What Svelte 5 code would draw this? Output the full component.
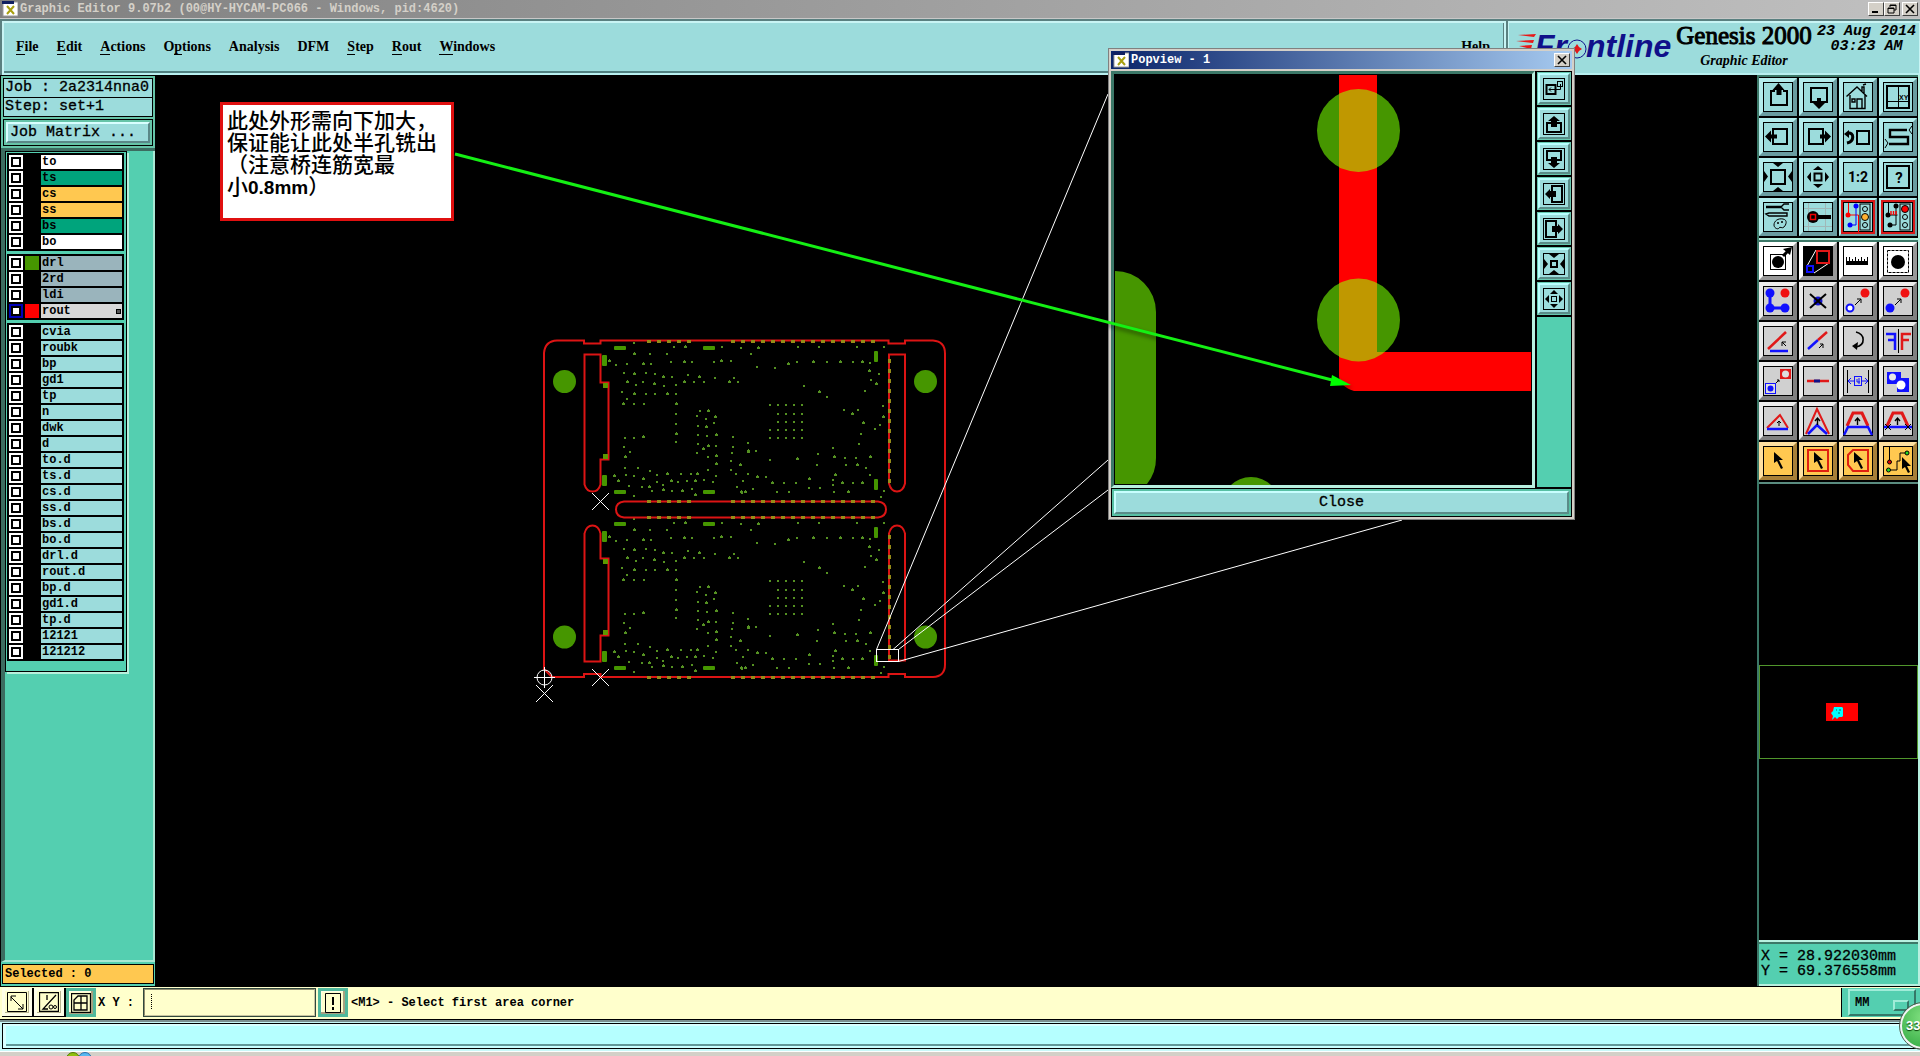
<script>
  const menus = [
    ['', 'F', 'ile'], ['', 'E', 'dit'], ['', 'A', 'ctions'], ['O', 'p', 'tions'],
    ['Analysis', '', ''], ['DFM', '', ''], ['', 'S', 'tep'], ['', 'R', 'out'], ['', 'W', 'indows']
  ];

  const layerGroups = [
    [
      { name: 'to', tone: 'white' }, { name: 'ts', tone: 'mask' }, { name: 'cs', tone: 'amber' },
      { name: 'ss', tone: 'amber' }, { name: 'bs', tone: 'mask' }, { name: 'bo', tone: 'white' }
    ],
    [
      { name: 'drl', tone: 'steel', swatch: 'green' }, { name: '2rd', tone: 'steel' },
      { name: 'ldi', tone: 'steel' }, { name: 'rout', tone: 'work', swatch: 'red', active: true }
    ],
    ['cvia', 'roubk', 'bp', 'gd1', 'tp', 'n', 'dwk', 'd', 'to.d', 'ts.d', 'cs.d', 'ss.d', 'bs.d',
      'bo.d', 'drl.d', 'rout.d', 'bp.d', 'gd1.d', 'tp.d', '12121', '121212'].map((name) => ({ name, tone: 'aqua' }))
  ];

  const noteLines = ['此处外形需向下加大，', '保证能让此处半孔铣出', '（注意桥连筋宽最'];

  const K = 'fill="none" stroke="#000"';
  const cursor = '<path d="M11 6v11l3-2 4 8 2-1-4-8h4z" fill="#000"/>';
  const smallArrow = '<path d="M12 19l6-6M14 13h4v4" fill="none" stroke="#000"/>';
  const upArrow = '<path d="M14.500 12v7M12 15l2.500-3 2.500 3" fill="none" stroke="#000" stroke-width="1.400"/>';

  const viewTools = [
    { n: 'Pan up', d: `<path d="M12 9H8v14h16V9h-4" ${K} stroke-width="2"/><path d="M15.500 1l6 7h-3v5h-5V8h-4z"/>` },
    { n: 'Pan down', d: `<rect x="8" y="6" width="16" height="14" ${K} stroke-width="2"/><path d="M16 27l6-6h-4v-5h-4v5h-4z"/>` },
    { n: 'Home', d: `<path d="M3.500 14.500L14 5l10 9.500M7 13v13.500h15V13M14 26v-9h5v9M9 17h3v3H9zM19 9V5h2v6M20 3l3-1" ${K} stroke-width="1.400"/>` },
    { n: 'Origin', d: `<rect x="4" y="4" width="22" height="22" ${K} stroke-width="2"/><path d="M15.500 4v22M4 19.500h22" ${K}/><text x="16" y="18" font-size="7" font-family="Liberation Sans">XY</text>` },
    { n: 'Pan left', d: `<rect x="10" y="7" width="14" height="15" ${K} stroke-width="2"/><path d="M2 14.500l6-6v4h6v4H8v4z"/>` },
    { n: 'Pan right', d: `<rect x="6" y="7" width="14" height="15" ${K} stroke-width="2"/><path d="M28 14.500l-6-6v4h-5v4h5v4z"/>` },
    { n: 'Previous view', d: `<rect x="14" y="9" width="12" height="13" ${K} stroke-width="2"/><path d="M5 11c6-1 7 8-1 10" ${K} stroke-width="3"/><path d="M1 12l5-4v8z"/>` },
    { n: 'Serpentine', d: `<path d="M24 8H7v7h18v7H6" ${K} stroke-width="2.400"/><path d="M29 4l-3 4 3 4M2 17l3 4-3 5" ${K}/>` },
    { n: 'Zoom in', d: `<rect x="8" y="8" width="14" height="14" ${K} stroke-width="2"/><path d="M10 1h10l-5 4zM10 29h10l-5-4zM1 9v11l4-5.500zM29 9v11l-4-5.500z"/>` },
    { n: 'Zoom out', d: `<rect x="11.500" y="11.500" width="7" height="7" ${K} stroke-width="2"/><path d="M10 8h10l-5-4zM10 22h10l-5 4zM8 10v10l-4-5zM22 10v10l4-5z"/>` },
    { n: 'Scale 1:2', d: `<text x="15" y="20" text-anchor="middle" font-size="14" font-weight="bold" font-family="Roboto">1:2</text>` },
    { n: 'Help on tool', d: `<rect x="4" y="4" width="22" height="22" ${K} stroke-width="2"/><text x="16" y="21" text-anchor="middle" font-size="15" font-weight="bold" font-family="Roboto">?</text>` },
    { n: 'Options', d: `<path d="M3 5h15" ${K} stroke-width="2.500"/><path d="M26 2h-5l-3 3 3 3h5M3 12l3-1h18v3H6z" ${K} stroke-width="1.400"/><path d="M11 23c0-4 4-7 9-6s3 6 1 8-4-1-5 1-5 0-5-3z" ${K}/><circle cx="15" cy="21" r="1"/><circle cx="19" cy="20" r="1"/>` },
    { n: 'Probe', d: `<path d="M5.500 1v28M22.500 1v28M1 6.500h28M1 24.500h28" fill="none" stroke="#a0b8b8"/><path d="M12 15h16" ${K} stroke-width="4"/><circle cx="10" cy="15" r="6"/><rect x="7.500" y="12.500" width="5" height="5" fill="none" stroke="#e00" stroke-width="1.500"/>` },
    { n: 'Nets control', alert: true, d: `<path d="M5.500 1v12h10v17" fill="none" stroke="#f00"/><circle cx="5" cy="13" r="2.500" fill="#f00"/><path d="M13 4v19H7" fill="none" stroke="#00f"/><circle cx="13" cy="4" r="2.500" fill="#00f"/><circle cx="7" cy="23" r="2.500" fill="#00f"/><rect x="17" y="2" width="10" height="26" ${K}/><circle cx="22" cy="7" r="2.500" ${K}/><circle cx="22" cy="15" r="3.500" fill="#ffb030" stroke="#000"/><circle cx="22" cy="23" r="2.500" ${K}/>` },
    { n: 'Nets stop', alert: true, d: `<path d="M5.500 1v12h9M13 4v19H7" ${K}/><circle cx="5" cy="13" r="2.500"/><circle cx="13" cy="4" r="2.500"/><circle cx="7" cy="23" r="2.500"/><path d="M8 13V9M10.500 13V9M13 13V9" fill="none" stroke="#f00" stroke-width="1.400"/><rect x="17" y="2" width="10" height="26" ${K}/><circle cx="22" cy="7" r="3.500" fill="#f00" stroke="#000"/><circle cx="22" cy="15" r="2.500" ${K}/><circle cx="22" cy="23" r="2.500" ${K}/>` }
  ];

  const editTools = [
    { n: 'Select feature', c: 'white', d: `<rect x="7.500" y="8.500" width="15" height="15" ${K}/><circle cx="15" cy="16" r="6"/><path d="M20 10l5-5" ${K} stroke-width="3"/><path d="M20 3l9-2-2 8z"/>` },
    { n: 'Popview', c: 'white', d: `<rect width="30" height="30"/><path d="M4 20L13 4M11 27l15-10" fill="none" stroke="#fff"/><rect x="14" y="5" width="12" height="12" fill="none" stroke="#e01818" stroke-width="2"/><rect x="4" y="20" width="6" height="6" fill="none" stroke="#11f" stroke-width="2"/>` },
    { n: 'Measure', c: 'white', d: `<path d="M3 11h1v4h2v-4h1v4h2v-2h1v2h2v-4h1v4h2v-2h1v2h2v-4h1v4h2v-2h1v2h2v-4h1v8H3z"/>` },
    { n: 'Highlight', c: 'white', d: `<rect x="4.500" y="4.500" width="21" height="22" ${K} stroke-dasharray="3 1"/><circle cx="15" cy="16" r="7"/>` },
    { n: 'Polyline', d: `<path d="M7 7v15h15" fill="none" stroke="#11f" stroke-width="3"/><g fill="#11f"><circle cx="7" cy="7" r="4.500"/><circle cx="7" cy="22" r="4.500"/><circle cx="22" cy="22" r="4.500"/></g><circle cx="22" cy="7" r="4.500" fill="#f01010"/>` },
    { n: 'Delete', d: `<circle cx="15" cy="15" r="4.500" fill="#11c"/><path d="M7 8l16 14M23 8L7 22" ${K} stroke-width="2"/>` },
    { n: 'Copy', d: `<circle cx="22" cy="7" r="4.500" fill="#f01010"/><circle cx="7" cy="22" r="3.500" fill="#fff" stroke="#11f" stroke-width="2"/>${smallArrow}` },
    { n: 'Move', d: `<circle cx="22" cy="7" r="4.500" fill="#f01010"/><circle cx="7" cy="22" r="4.500" fill="#11f"/>${smallArrow}` },
    { n: 'Rotate line', d: `<path d="M5 23L23 6" stroke="#e01818" stroke-width="2.500"/><path d="M7 25h18" stroke="#11f" stroke-width="2.500"/><path d="M23 20l-4-4M19 20v-4h4" ${K}/>` },
    { n: 'Extend line', d: `<path d="M5 23l10-9" stroke="#11f" stroke-width="2.500"/><path d="M15 14l9-8" stroke="#e01818" stroke-width="2.500"/><path d="M16 22l4-4M17 18h3v4" ${K}/>` },
    { n: 'Rotate', d: `<path d="M13 6c9 2 10 13 0 15" ${K} stroke-width="1.600"/><path d="M9 20l6-4-1 8z"/>` },
    { n: 'Mirror', d: `<path d="M15.500 3v24" ${K}/><path d="M3 8h9v16M5 14h7" fill="none" stroke="#11f" stroke-width="2.500"/><path d="M28 8h-9v16M26 14h-7" fill="none" stroke="#e01818" stroke-width="2.500"/>` },
    { n: 'Change symbol', d: `<rect x="17" y="3" width="11" height="10" fill="#e01818"/><circle cx="22.500" cy="8" r="3.500" fill="#ddd"/><rect x="2.500" y="17.500" width="10" height="10" fill="#ddd" stroke="#11f"/><circle cx="7.500" cy="22.500" r="3" fill="#11f"/><path d="M13 17l3-3M14 14h2v2" ${K}/>` },
    { n: 'Break', d: `<path d="M4 15h22" stroke="#e01818" stroke-width="2.500"/><path d="M11 15h6" stroke="#118" stroke-width="3"/>` },
    { n: 'Spread', d: `<path d="M4.500 4v23M25.500 4v23" ${K}/><g fill="none" stroke="#11f"><rect x="11.500" y="10.500" width="7" height="9"/><path d="M11 15H6M8 12l-3 3 3 3M19 15h5M22 12l3 3-3 3M14 13v3h3M16 12v6"/></g>` },
    { n: 'Merge', d: `<path d="M4 6h14v6h8v14H14v-8H4z" fill="#11f"/><circle cx="9.500" cy="11" r="3.500" fill="#e8e8e8"/><circle cx="18" cy="19" r="4.500" fill="#fff"/>` },
    { n: 'Stretch corner', d: `<path d="M4 22L17 9l8 13" fill="none" stroke="#e01818" stroke-width="2"/><path d="M4 23h21" stroke="#11f" stroke-width="2.500"/><path d="M16 20v-5M14 17l2-2 2 2" ${K}/>` },
    { n: 'Stretch peak', d: `<path d="M3 28L14 3l12 25" fill="none" stroke="#e01818" stroke-width="2"/><path d="M5 28l9-9 10 9" fill="none" stroke="#11f" stroke-width="2.500"/>${upArrow}` },
    { n: 'Stretch trapezoid', d: `<path d="M4 20l6-13h9l6 13" fill="none" stroke="#e01818" stroke-width="3"/><path d="M1 29l4-8h20l4 8" fill="none" stroke="#11f" stroke-width="2.500"/>${upArrow}` },
    { n: 'Move segment', d: `<path d="M4 20l6-13h9l6 13" fill="none" stroke="#e01818" stroke-width="3"/><path d="M1 21h28" stroke="#11f" stroke-width="2.500"/><path d="M2 18l6 6M8 18l-6 6M22 18l6 6M28 18l-6 6" ${K}/>${upArrow}` },
    { n: 'Select', c: 'amber', d: cursor },
    { n: 'Frame select', c: 'amber', d: `<rect x="5" y="4" width="20" height="21" fill="none" stroke="#e02010" stroke-width="2"/>${cursor}` },
    { n: 'Polygon select', c: 'amber', d: `<path d="M10 4h15v21H10l-5-6V9z" fill="none" stroke="#e02010" stroke-width="2"/>${cursor}` },
    { n: 'Net select', c: 'amber', d: `<path d="M6.500 1v15M6 24h8v-9h3V7h6" ${K}/><circle cx="6.500" cy="16" r="2" fill="#d00" stroke="#000"/><circle cx="5.500" cy="24" r="2" fill="#2d2" stroke="#000"/><circle cx="24" cy="7" r="2" fill="#2d2" stroke="#000"/><path d="M19 11v12l3-2 3 6 2-1-3-6h4z"/>` }
  ];

  const popTools = [
    { n: 'Link view', d: `<rect x="3.500" y="7" width="9" height="9" ${K} stroke-width="2"/><rect x="14.500" y="3.500" width="5" height="5" ${K}/><path d="M17.500 6v5.500H6M8 9.500l-2 2 2 2" ${K}/>` },
    { n: 'Scroll up', d: `<path d="M8 10H4v9h14v-9h-4" ${K} stroke-width="2"/><path d="M11 3l6 5h-3v6H8V8H5z"/>` },
    { n: 'Scroll down', d: `<path d="M8 12H4V3h14v9h-4" ${K} stroke-width="2"/><path d="M11 20l6-5h-3V9H8v6H5z"/>` },
    { n: 'Scroll left', d: `<path d="M9 8V3h10v16H9v-5" ${K} stroke-width="2"/><path d="M2 11l5-5v2h6v6H7v2z"/>` },
    { n: 'Scroll right', d: `<path d="M13 8V3H3v16h10v-5" ${K} stroke-width="2"/><path d="M20 11l-5-5v2H9v6h6v2z"/>` },
    { n: 'Zoom in view', d: `<rect x="8" y="8" width="6" height="6" ${K} stroke-width="2"/><path d="M6 1h10l-5 4zM6 21h10l-5-4zM1 6v10l4-5zM21 6v10l-4-5z"/>` },
    { n: 'Zoom out view', d: `<rect x="8.500" y="8.500" width="5" height="5" ${K}/><path d="M7 6h8l-4-4zM7 16h8l-4 4zM6 7v8l-4-4zM16 7v8l4-4z"/>` }
  ];

  /* drill hits of one board, in workspace coordinates */
  const hits = [
    634,343, 674,347, 685,347, 722,347, 741,348, 634,354, 650,354, 667,354, 609,361, 616,365, 627,364, 643,364, 651,364, 671,362, 684,362, 692,362,
    714,362, 721,361, 731,361, 624,373, 634,374, 646,373, 655,374, 663,377, 672,377, 688,375, 699,377, 715,378, 734,378, 627,382, 636,385, 643,382,
    654,384, 664,386, 676,385, 684,382, 694,382, 704,382, 729,382, 738,382, 622,392, 634,394, 646,394, 655,394, 667,394, 676,394, 627,399, 623,404,
    634,404, 644,404, 676,404, 676,414, 676,424, 676,434, 676,442, 700,411, 708,411, 697,416, 706,419, 715,417, 714,423, 698,426, 706,427,
    625,438, 634,438, 643,437, 624,447, 630,452, 625,457, 698,435, 707,436, 716,435, 733,437, 698,444, 708,446, 716,446, 733,447, 703,449,
    697,453, 708,457, 716,456, 732,453, 748,443, 748,451, 731,461, 731,470, 740,465, 748,474, 736,474, 716,464, 708,470, 716,476, 697,474,
    625,468, 638,468, 614,476, 626,475, 634,476, 643,479, 650,471, 657,475, 667,474, 681,474, 691,474, 618,481, 629,486, 642,487, 649,487,
    657,482, 663,485, 671,481, 678,482, 687,481, 695,481, 704,480, 713,482, 663,490, 652,491, 672,491, 682,491, 692,489, 634,496, 695,495,
    737,487, 743,481, 745,492, 742,493, 751,354, 758,348, 757,367, 775,368, 788,364, 798,347, 797,362, 813,362, 819,347, 827,362,
    840,362, 853,362, 857,347, 862,362, 870,363, 884,347, 869,371, 879,374, 871,380, 876,384, 865,391, 804,386, 819,392, 827,397,
    844,410, 852,414, 858,410, 883,406, 883,417, 880,425, 875,429, 863,423, 861,434, 859,444, 748,452, 756,451, 770,460, 797,459,
    818,454, 833,448, 834,457, 845,458, 856,458, 870,457, 817,465, 846,465, 857,465, 866,468, 870,475, 757,477, 766,477,
    753,489, 772,483, 784,483, 796,483, 809,479, 809,488, 820,488, 835,475, 833,480, 833,485, 842,483, 853,483, 834,492, 848,492,
    777,492, 789,492, 741,492, 884,491, 881,497, 862,483
  ];
  const dots = [];
  for (let r = 0; r < 5; r++) {
    for (let c = 0; c < 5; c++) {
      if (c === 0 && (r === 1 || r === 2)) continue;
      dots.push([770 + c * 8, [405, 414, 422, 430, 438][r]]);
    }
  }
  for (let i = 0; i < hits.length; i += 2) dots.push([hits[i], hits[i + 1]]);
  const dotPath = dots
    .map(([x, y], i) => (i > 22 && i % 3 === 1 ? `M${x - 2} ${y}h1v-1h1v-1h1v1h1v2h-3v-1h-1z` : `M${x - 1} ${y - 1}h2v2h-2z`))
    .join('');

  const edgeX = [649, 659, 669, 679, 689, ...Array.from({ length: 15 }, (_, i) => 733 + i * 10)];
  const edgePath = [341, 501, 517, 677].flatMap((y) => edgeX.map((x) => `M${x - 2} ${y - 1}h4v3h-4z`)).join('');
  const sidePath = [361, 537].flatMap((y0) => Array.from({ length: 13 }, (_, i) => `M888 ${y0 - 2 + i * 10}h3v4h-3z`)).join('');

  let xy = $state('');
  let unit = $state('MM');
</script>

{#snippet appIcon()}
  <svg class="app-icon" viewBox="0 0 16 16" aria-hidden="true">
    <rect x="1" y="1" width="15" height="14" fill="#fff" stroke="#999" />
    <rect x="0" y="0" width="12" height="3" fill="#102060" />
    <path d="M5 5l7 8M12 5l-7 8" stroke="#a8a010" stroke-width="2" />
  </svg>
{/snippet}

{#snippet tool(t, tone)}
  <button class="tool {t.c ?? tone}" class:alert={t.alert} aria-label={t.n}>
    <svg viewBox="0 0 30 30" aria-hidden="true">
      <rect x="0.500" y="0.500" width="29" height="29" fill="none" stroke="#000" />
      {@html t.d}
    </svg>
  </button>
{/snippet}

<div class="app">
  <header class="titlebar">
    {@render appIcon()}
    <h1>Graphic Editor 9.07b2 (00@HY-HYCAM-PC066 - Windows, pid:4620)</h1>
    <div class="win-buttons">
      <button class="win" aria-label="Minimize"><svg viewBox="0 0 12 10"><path d="M2 8h6" stroke="#000" stroke-width="2" /></svg></button>
      <button class="win" aria-label="Restore"><svg viewBox="0 0 12 10"><path d="M4 3V1h6v5H8M4 1.500h6M2 4h6v5H2zM2 4.500h6" fill="none" stroke="#000" /></svg></button>
      <button class="win apart" aria-label="Close window"><svg viewBox="0 0 12 10"><path d="M2 1l8 8M10 1L2 9" stroke="#000" stroke-width="1.600" /></svg></button>
    </div>
  </header>

  <div class="top">
    <nav class="menubar">
      {#each menus as [a, key, b]}
        <button class="menu">{a}<span class="key">{key}</span>{b}</button>
      {/each}
      <button class="menu help">Help</button>
    </nav>
    <div class="brand">
      <svg class="logo" viewBox="0 0 160 40" role="img" aria-label="Frontline">
        <path d="M4 8l18-1-2 3zM2 14l18-1-1 3zM5 19l13-1-1 4z" fill="#e81818" />
        <g class="logo-text">
          <text x="21" y="30">Fr</text>
          <text x="72" y="30">ntline</text>
        </g>
        <circle cx="63" cy="22" r="9" fill="none" stroke="#10108a" />
        <path d="M63 17l2 3 3 2-3 2-2 3-2-3-3-2 3-2z" fill="#e01818" />
      </svg>
      <div class="product">
        <strong>Genesis 2000</strong>
        <em>Graphic Editor</em>
      </div>
      <time class="clock"><span>23 Aug 2014</span><span>03:23 AM</span></time>
    </div>
  </div>

  <main class="main">
    <aside class="left">
      <section class="job">
        <p>Job : 2a2314nna0</p>
        <p>Step: set+1</p>
        <div class="matrix"><button>Job Matrix ...</button></div>
      </section>
      <section class="layers-pane">
        <div class="layers">
          {#each layerGroups as group}
            <ul>
              {#each group as layer}
                <li>
                  <label class="row">
                    <input type="checkbox" class:active={layer.active} />
                    <i class="swatch {layer.swatch ?? ''}"></i>
                    <span class="name {layer.tone}">{layer.name}{#if layer.active}<b class="mark" aria-hidden="true"></b>{/if}</span>
                  </label>
                </li>
              {/each}
            </ul>
          {/each}
        </div>
      </section>
      <p class="selected">Selected : 0</p>
    </aside>

    <section class="workspace">
      <svg class="canvas" viewBox="155 75 1602 911" width="1602" height="911" aria-label="Panel drawing">
        <g fill="#469600">
          <circle cx="564.500" cy="381.500" r="11.500" /><circle cx="925.500" cy="381.500" r="11.500" />
          <circle cx="564.500" cy="637" r="11.500" /><circle cx="925.500" cy="637" r="11.500" />
          {#each [0, 176] as dy}
            <g transform="translate(0 {dy})">
              <path d={dotPath} fill="#559122" />
              {#each [[614, 346], [703, 346], [614, 490], [703, 490]] as [x, y]}
                <rect {x} {y} width="12" height="4" rx="1" />
              {/each}
              {#each [[602, 355], [602, 475], [874, 351], [874, 479]] as [x, y]}
                <rect {x} {y} width={x > 800 ? 4 : 5} height="11" rx="1" />
              {/each}
            </g>
          {/each}
        </g>
        <g class="rout">
          <path d="M557 340.500h27v3h16.500v-3h288v3h16.500v-3h28q12 1 12 13v311q0 12-12 12.500h-28v-3h-16.500v3h-288v-3h-16.500v3h-32l-8-8V353q1-12 13-12.500z" />
          <path d="M584.500 354.500h16v28h8v77h-8v25q-2 7-8 7t-8-7z" />
          <path d="M889 354.500h16v129q-2 8-8 8t-8-8z" />
          <path d="M624 501.500h254q8 1 8 8t-8 8H624q-8-1-8-8t8-8z" />
          <path d="M584.500 661.500h16v-26h8v-77h-8v-25q-2-8-8-8t-8 8z" />
          <path d="M889 660.500h16v-127q-2-8-8-8t-8 8z" />
        </g>
        <path d="M603 383h5v5h-5zM603 454h5v5h-5zM603 559h5v5h-5zM603 630h5v5h-5z" fill="#5c9800" />
        <path d="{edgePath}{sidePath}" fill="#968c18" />
        <g fill="none" stroke="#fff">
          <path d="M592 493l17 17M609 493l-17 17M592 669l17 17M609 669l-17 17M536 685l17 17M553 685l-17 17" />
          <circle cx="544.500" cy="677.500" r="7.500" />
          <path d="M534 677.500h21M544.500 667v21" />
          <rect x="876.500" y="649.500" width="22" height="12" />
          <path d="M876.500 649.500L1108 94M893 649.500L1108 460M898.500 649.500L1108 490M898.500 661.500L1402 520" />
        </g>
      </svg>

      <section class="popview" aria-label="Popview - 1">
        <header class="pop-title">
          {@render appIcon()}
          <h2>Popview - 1</h2>
          <button class="win" aria-label="Close popview"><svg viewBox="0 0 12 10"><path d="M2 1l8 8M10 1L2 9" stroke="#000" stroke-width="1.600" /></svg></button>
        </header>
        <div class="pop-body">
          <svg class="detail" viewBox="1114 74 418 411" preserveAspectRatio="xMinYMin meet" aria-label="Magnified rout corner">
            <rect x="1113" y="74" width="420" height="411" fill="#000" />
            <g fill="#469600">
              <circle cx="1358.500" cy="130.500" r="41.500" /><circle cx="1358.500" cy="320" r="41.500" />
              <path d="M1115 271a41 41 0 0 1 41 41v146a41 41 0 0 1-9 26h-32z" />
              <circle cx="1251" cy="506" r="29" />
            </g>
            <path d="M1339 75h38v277h154v39h-177q-15-5-15-15z" fill="#f00" />
            <clipPath id="routClip"><path d="M1339 75h38v277h154v39h-177q-15-5-15-15z" /></clipPath>
            <g fill="#c09800" clip-path="url(#routClip)">
              <circle cx="1358.500" cy="130.500" r="41.500" /><circle cx="1358.500" cy="320" r="41.500" />
            </g>
          </svg>
          <div class="pop-tools">
            {#each popTools as t}
              <div class="cell">
                <button aria-label={t.n}>
                  <svg viewBox="0 0 22 22" aria-hidden="true">
                    <rect x="0.500" y="0.500" width="21" height="21" fill="none" stroke="#000" />
                    {@html t.d}
                  </svg>
                </button>
              </div>
            {/each}
          </div>
        </div>
        <div class="pop-close"><button>Close</button></div>
      </section>

      <div class="note" lang="zh-CN">
        {#each noteLines as line}<p>{line}</p>{/each}
        <p>小<span>0.8mm</span>）</p>
      </div>

      <svg class="pointer" viewBox="155 75 1602 911" width="1602" height="911" aria-hidden="true">
        <path d="M455 154L1336 381" stroke="#14f014" stroke-width="3" />
        <path d="M1332 375l19 10-21 1z" fill="#0f0" />
      </svg>
    </section>

    <aside class="right">
      <div class="tools">{#each viewTools as t}{@render tool(t, 'aqua')}{/each}</div>
      <div class="tools edit">{#each editTools as t}{@render tool(t, 'gray')}{/each}</div>
      <div class="overview">
        <div class="extent">
          <svg viewBox="0 0 32 18" aria-label="Overview map">
            <rect width="32" height="18" fill="#f00" />
            <path d="M8 4h8l1 1v8l-1 1h-3l-2 2-2-2-3 3 1-4-2-3 2-2z" fill="#0ff" />
            <path d="M10 7h1M13 7h2M12 10h2" stroke="#066" />
          </svg>
        </div>
      </div>
      <output class="coords"><span>X = 28.922030mm</span><span>Y = 69.376558mm</span></output>
    </aside>
  </main>

  <footer class="command">
    <button class="cmd" aria-label="Absolute mode"><svg viewBox="0 0 20 20"><path d="M.5.500h19v19H.5zM4 5l12 12M4 9V4h5M16 12v5h-5" fill="none" stroke="#000" /></svg></button>
    <button class="cmd" aria-label="Angle mode"><svg viewBox="0 0 20 20"><path d="M.5.500h19v19H.5zM17 3L4 17h5M8 3v5" fill="none" stroke="#000" stroke-width="1.300" /><circle cx="12" cy="15" r="2" fill="none" stroke="#000" /><circle cx="16" cy="15" r="1.500" fill="none" stroke="#000" /></svg></button>
    <button class="cmd framed" aria-label="Grid snap"><svg viewBox="0 0 20 20"><path d="M.5.500h19v19H.5zM7 3h9v14H3V7zM10 3v14M3 10h13" fill="none" stroke="#000" stroke-width="1.300" /></svg></button>
    <label class="xy" for="xy">X Y :</label>
    <input id="xy" class="xy-input" bind:value={xy} />
    <button class="cmd framed" aria-label="Apply"><svg viewBox="0 0 20 20"><path d="M2.500.500h15v19h-15z" fill="none" stroke="#000" /><path d="M10 4v8M10 14v3" stroke="#000" stroke-width="2" /></svg></button>
    <output class="message">&lt;M1&gt; - Select first area corner</output>
    <div class="unit">
      <select bind:value={unit} aria-label="Units"><option>MM</option><option>INCH</option></select>
    </div>
  </footer>
  <div class="status"><div></div></div>
  <div class="taskbar"><i class="orb lime"></i><i class="orb sky"></i></div>
  <div class="badge">33</div>
</div>

<style>
  :global(body) { margin: 0; background: #000; overflow: hidden; }
  .app { --aqua: #9cdcdc; --green: #54cfb0; --mono: "Liberation Mono", monospace;
    position: relative; display: flex; flex-direction: column; height: 100vh; overflow: hidden;
    font: bold 12px/14px var(--mono); color: #000; background: #000; }
  .app :global(*) { box-sizing: border-box; }
  button, input, select { font: inherit; color: inherit; margin: 0; padding: 0; border-radius: 0; }
  p, h1, h2, ul { margin: 0; padding: 0; font: inherit; list-style: none; }
  svg { display: block; }

  .titlebar { display: flex; align-items: center; height: 19px; flex: none; padding: 0 2px; gap: 2px;
    background: linear-gradient(90deg, #808080, #c0c0c0); color: #d4d0c8; border-bottom: 1px solid #c8c8c8; }
  .titlebar h1 { flex: 1; }
  .app-icon { width: 16px; height: 16px; flex: none; }
  .win-buttons { display: flex; }
  .win { width: 16px; height: 14px; background: #d4d0c8; border: 1px solid; border-color: #fff #404040 #404040 #fff; display: grid; place-items: center; }
  .win svg { width: 12px; height: 10px; }
  .apart { margin-left: 2px; }

  .top { display: flex; height: 56px; flex: none; background: #5a8080; padding-top: 2px; }
  .menubar, .brand { background: var(--aqua); border: 2px solid #c8f4f4; border-bottom-color: #b8f0f0; display: flex; }
  .menubar { flex: 1; margin: 0 2px; align-items: center; padding: 0 14px 3px 12px; gap: 18px; font: bold 14px/16px "Liberation Serif", serif;
    box-shadow: inset 0 -2px #4f8080, inset -1px 0 #5a8080; }
  .menu { background: none; border: 0; }
  .key { border-bottom: 1px solid #000; }
  .help { margin-left: auto; }
  .brand { width: 412px; border-left-width: 1px; border-right-width: 1px; padding: 0 3px 0 5px; }
  .logo { width: 160px; height: 40px; margin-top: 4px; flex: none; }
  .logo-text { font: italic bold 32px "Liberation Sans", sans-serif; fill: #10108a; }
  .product { display: flex; flex-direction: column; align-items: center; width: 138px; margin-left: 1px; }
  .product strong { font: 25px/26px "Liberation Serif", serif; white-space: nowrap; -webkit-text-stroke: 1px #000; }
  .product em { font: italic bold 14px/24px "Liberation Serif", serif; }
  .clock { display: flex; flex-direction: column; align-items: center; font: italic bold 15px/15px var(--mono); margin: 1px 0 0 auto; white-space: nowrap; }

  .main { display: flex; flex: 1; min-height: 0; }
  .left { width: 155px; flex: none; display: flex; flex-direction: column; background: var(--green); border-left: 1px solid #000; border-top: 1px solid #000; }
  .job { padding: 2px; background: #66c4a8; font: 15px/18px var(--mono); -webkit-text-stroke: 1px #000; border-bottom: 3px solid #3c6c60; }
  .job, .coords, .pop-close button { -webkit-text-stroke-width: thin; }
  .job p { background: var(--aqua); border: 1px solid #000; height: 20px; padding: 0 1px; white-space: nowrap; }
  .job p + p { margin-top: -1px; }
  .matrix { border: 1px solid #000; padding: 2px; margin-top: 2px; }
  .matrix button { width: 100%; height: 21px; text-align: left; padding-left: 2px; background: var(--aqua); border: 2px solid; border-color: #d8ffff #5a8888 #5a8888 #d8ffff; }
  .layers-pane { flex: 1; border-left: 4px solid #3c6c60; border-right: 2px solid #a8e8d4; border-bottom: 2px solid #a8e8d4; }
  .layers { width: 122px; border: 1px solid #000; box-shadow: 2px 2px #b8f0dc; padding: 1px 2px 10px 1px; display: flex; flex-direction: column; gap: 3px; }
  .layers ul { background: #000; padding: 2px 2px 0 1px; }
  .row { display: flex; gap: 2px; height: 16px; padding-left: 1px; }
  .row input { appearance: none; width: 14px; height: 14px; flex: none; background: #fff; border: 2px solid #fff; box-shadow: inset 0 0 0 2px #000; }
  .row input.active { border-color: #0000b8; }
  .swatch { width: 14px; height: 14px; flex: none; }
  .swatch.green { background: #469600; }
  .swatch.red { background: #f00; }
  .name { flex: 1; height: 14px; padding: 0 1px; display: flex; justify-content: space-between; align-items: center; line-height: 14px; }
  .name.white { background: #fff; }
  .name.mask { background: #00a47c; }
  .name.amber { background: #ffc850; }
  .name.steel { background: #9ab4bc; }
  .name.work { background: #d8d8d8; }
  .name.aqua { background: var(--aqua); }
  .mark { width: 5px; height: 5px; border: 1px solid #000; background: #555; }
  .selected { height: 20px; margin: 2px 1px; padding-left: 2px; line-height: 18px; background: #ffc850; border: 1px solid #000; }

  .workspace { flex: 1; min-width: 0; position: relative; background: #000; }
  .canvas, .pointer { position: absolute; left: 0; top: 0; }
  .pointer { z-index: 3; pointer-events: none; filter: drop-shadow(1px 3px 2px rgba(0, 0, 0, 0.500)); }
  .rout { fill: none; stroke: #dc1414; stroke-width: 2; }
  .note { position: absolute; left: 65px; top: 27px; width: 234px; height: 119px; padding: 3px 0 0 4px; background: #fff; border: 3px solid #e01010;
    font: 500 21px/22px "Noto Sans CJK SC", sans-serif; white-space: nowrap; }
  .note p { height: 22px; }
  .note span { font: bold 19px/22px "Liberation Sans", sans-serif; }

  .popview { position: absolute; z-index: 2; left: 953px; top: -27px; width: 467px; display: flex; flex-direction: column; background: #58c0a4;
    border: 3px solid #d4d0c8; outline: 1px solid #808080; outline-offset: -1px; box-shadow: inset 1px 1px #404040; }
  .pop-title { display: flex; align-items: center; gap: 2px; height: 18px; padding: 0 2px; color: #fff; background: linear-gradient(90deg, #0a246a, #a6caf0); }
  .pop-title h2 { flex: 1; }
  .pop-body { display: flex; border-top: 2px solid #d4d0c8; }
  .detail { flex: 1; min-width: 0; height: 417px; border: 3px solid; border-color: #3c7868 #b8f0e0 #b8f0e0 #3c7868; }
  .pop-tools { width: 37px; background: var(--green); border: solid #000; border-width: 1px 1px 1px 2px; }
  .cell { height: 35px; padding: 1px; border-bottom: 2px solid #000; background: #66c8b0; }
  .cell button { width: 32px; height: 31px; display: grid; place-items: center; background: var(--aqua); border: 2px solid; border-color: #b8ffff #5a8c88 #5a8c88 #b8ffff; }
  .cell svg { width: 22px; height: 22px; }
  .pop-close { padding: 2px; border: 1px solid #000; }
  .pop-close button { width: 100%; height: 23px; background: var(--aqua); border: 2px solid; border-color: #c8ffff #5a8c88 #5a8c88 #c8ffff; font: 15px/18px var(--mono); -webkit-text-stroke-color: #000; }

  .right { width: 163px; flex: none; display: flex; flex-direction: column; border-left: 2px solid #3c7868; border-right: 2px solid #b8f0e0; }
  .tools { display: grid; grid-template-columns: repeat(4, 1fr); gap: 2px; padding: 1px 1px 2px 0; background: #000; border-top: 2px solid #3c7868; border-bottom: 2px solid #b8f0e0; }
  .tools.edit { padding-top: 0; border-bottom-color: #5a8c80; }
  .tool { height: 38px; display: grid; place-items: start; border: 4px solid; }
  .tool svg { width: 30px; height: 30px; }
  .tool.aqua { background: var(--aqua); border-color: #b4ecec #6a9ca0 #6a9ca0 #b4ecec; }
  .tool.gray { background: #d0d0d0; border-color: #ececec #808080 #808080 #ececec; }
  .tool.white { background: #fff; border-color: #fff #989898 #989898 #fff; }
  .tool.amber { background: #ffc850; border-color: #ffe0a0 #a88038 #a88038 #ffe0a0; }
  .tool.alert svg { outline: 2px solid #d81818; }
  .overview { flex: 1; display: flex; flex-direction: column; justify-content: center; background: #000; border-bottom: 2px solid #b8f0e0; }
  .extent { height: 94px; border: 1px solid #50962c; display: grid; place-items: center; padding-left: 6px; }
  .extent svg { width: 32px; height: 18px; }
  .coords { display: flex; flex-direction: column; height: 44px; padding: 5px 2px 0; background: var(--green); border-top: 2px solid #3c7868; border-bottom: 2px solid #b8f0e0; font: 15px/15px var(--mono); -webkit-text-stroke-color: #000; white-space: nowrap; }

  .command { display: flex; height: 34px; flex: none; padding: 1px 0 2px 2px; background: #ffffcc; border-top: 1px solid #000; border-bottom: 1px solid #000; }
  .cmd { width: 32px; flex: none; display: grid; place-items: center; background: #ffffcc; border: 0; border-right: 2px solid #000; border-bottom: 1px solid #000; box-shadow: inset 0 0 0 3px #ffffe8, inset -1px -1px 0 3px #b8b490; }
  .cmd svg { width: 20px; height: 20px; }
  .cmd.framed { width: 30px; border: 3px solid #50b89c; box-shadow: inset -2px -2px #a8a080, inset 1px 1px #ffffe8; }
  .xy { width: 47px; padding-left: 2px; align-self: center; white-space: nowrap; }
  .xy-input { width: 173px; margin-right: 2px; padding: 0 6px; border: 2px solid; border-color: #908c70 #c8c4a0 #c8c4a0 #908c70; outline: 1px solid #30483c; outline-offset: -1px;
    background: repeating-linear-gradient(#000 0 1px, #ffffcc 1px 2px) 6px 4px / 1px 16px no-repeat #ffffcc; }
  .message { flex: 1; align-self: center; padding-left: 3px; }
  .unit { position: relative; width: 79px; padding: 1px 4px 1px 6px; background: var(--green); border-left: 1px solid #000; }
  .unit select { appearance: none; width: 100%; height: 100%; padding: 0 5px; background: var(--green); border: 2px solid; border-color: #a0ecd8 #347868 #347868 #a0ecd8; }
  .unit::after { content: ""; position: absolute; right: 11px; top: 12px; width: 12px; height: 7px; border: 2px solid; border-color: #a0ecd8 #347868 #347868 #a0ecd8; pointer-events: none; }
  .status { height: 31px; flex: none; background: #c8f8f8; border-top: 2px solid #7c9090; padding: 1px 0 2px 2px; }
  .status div { height: 100%; background: #b5ffff; border: solid #000; border-width: 1px 0 1px 1px; box-shadow: inset 3px 2px #d8ffff, inset 0 -2px #c8ffff, inset 0 -4px #609898; }
  .taskbar { height: 5px; flex: none; position: relative; overflow: hidden; background: #d4d0c8; border-top: 1px solid #fff; }
  .orb { position: absolute; top: 0; left: 66px; width: 14px; height: 14px; border-radius: 50%; background: #90c010; border: 1px solid #507808; }
  .orb.sky { left: 78px; background: #58b8f0; border-color: #2870b0; }
  .badge { position: absolute; right: -26px; bottom: 7px; width: 46px; height: 46px; border-radius: 50%; border: 2px solid #f4f4f4; outline: 1px solid #506050;
    background: radial-gradient(circle at 50% 30%, #80e080, #30a840); color: #fff; font: bold 13px/42px "Liberation Sans", sans-serif; padding-left: 4px; text-shadow: 0 1px 1px #064006; }
</style>
